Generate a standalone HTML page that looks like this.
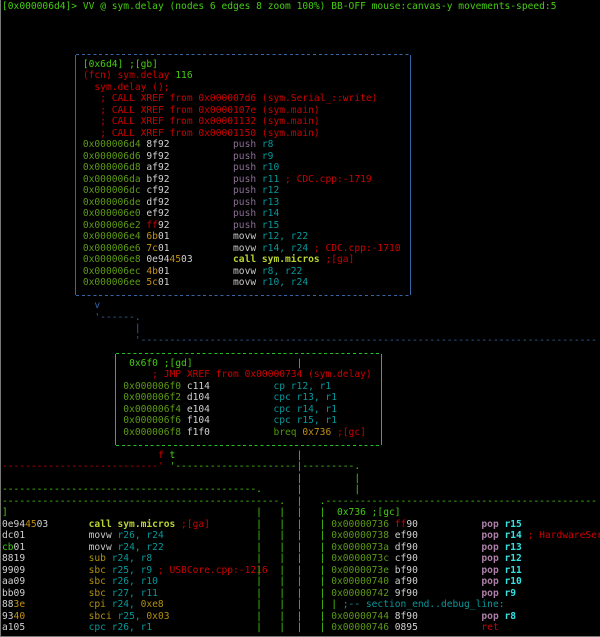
<!DOCTYPE html>
<html><head><meta charset="utf-8"><style>
html,body{margin:0;padding:0;background:#000;}
#s{position:relative;width:600px;height:637px;overflow:hidden;background:#000;font-family:"DejaVu Sans Mono","Liberation Mono",monospace;font-size:9.6px;border-left:1px solid #777;box-sizing:border-box;}
.r{position:absolute;left:1px;height:11.5px;line-height:11.5px;width:700px;}
.r span{position:absolute;white-space:pre;top:0;}
.g{color:#44cc11}.a{color:#5c9a14}.w{color:#d0d0d0}.R{color:#cc0000}.y{color:#c49010}
.p{color:#8a6e93}.c{color:#06989a}.C{color:#34e2e2;font-weight:bold}.m{color:#c8c8c8}
.k{color:#b8d430;font-weight:bold}.b{color:#3465a4}.o{color:#ad7fa8;font-weight:bold}.ol{color:#4e9a06}.s{color:#b09010}
.h{position:absolute;height:1px;}
.v{position:absolute;width:1px;}
.hb{background:repeating-linear-gradient(to right,#3465a4 0 3px,transparent 3px 5.78px)}
.hg{background:repeating-linear-gradient(to right,#22c022 0 3px,transparent 3px 5.78px)}
.vb{background:#3465a4}.vg{background:#22c022}
#bot{position:absolute;left:0;top:636px;width:600px;height:1px;background:#777}
</style></head><body><div id="s">
<div class="r" style="top:1px"><span class="g" style="left:0ch">[0x000006d4]&gt; VV @ sym.delay (nodes 6 edges 8 zoom 100%) BB-OFF mouse:canvas-y movements-speed:5</span></div>

<div class="h hb" style="left:75px;top:54px;width:335px"></div>
<div class="h hb" style="left:75px;top:295px;width:335px"></div>
<div class="v vb" style="left:74px;top:55px;height:240px"></div>
<div class="v vb" style="left:409px;top:55px;height:240px"></div>

<div class="r" style="top:58.5px"><span class="g" style="left:14ch">[0x6d4] ;[gb]</span></div>
<div class="r" style="top:70px"><span class="R" style="left:14ch">(fcn) sym.delay </span><span class="g" style="left:30ch">116</span></div>
<div class="r" style="top:81.5px"><span class="R" style="left:16ch">sym.delay ();</span></div>
<div class="r" style="top:93px"><span class="R" style="left:17ch">; CALL XREF from 0x000007d6 (sym.Serial_::write)</span></div>
<div class="r" style="top:104.5px"><span class="R" style="left:17ch">; CALL XREF from 0x0000107e (sym.main)</span></div>
<div class="r" style="top:116px"><span class="R" style="left:17ch">; CALL XREF from 0x00001132 (sym.main)</span></div>
<div class="r" style="top:127.5px"><span class="R" style="left:17ch">; CALL XREF from 0x00001150 (sym.main)</span></div>
<div class="r" style="top:139px"><span class="a" style="left:14ch">0x000006d4</span><span class="w" style="left:25ch">8f92</span><span class="p" style="left:40ch">push</span><span class="c" style="left:45ch">r8</span></div>
<div class="r" style="top:150.5px"><span class="a" style="left:14ch">0x000006d6</span><span class="w" style="left:25ch">9f92</span><span class="p" style="left:40ch">push</span><span class="c" style="left:45ch">r9</span></div>
<div class="r" style="top:162px"><span class="a" style="left:14ch">0x000006d8</span><span class="w" style="left:25ch">af92</span><span class="p" style="left:40ch">push</span><span class="c" style="left:45ch">r10</span></div>
<div class="r" style="top:173.5px"><span class="a" style="left:14ch">0x000006da</span><span class="w" style="left:25ch">bf92</span><span class="p" style="left:40ch">push</span><span class="c" style="left:45ch">r11</span><span class="R" style="left:49ch">; CDC.cpp:-1719</span></div>
<div class="r" style="top:185px"><span class="a" style="left:14ch">0x000006dc</span><span class="w" style="left:25ch">cf92</span><span class="p" style="left:40ch">push</span><span class="c" style="left:45ch">r12</span></div>
<div class="r" style="top:196.5px"><span class="a" style="left:14ch">0x000006de</span><span class="w" style="left:25ch">df92</span><span class="p" style="left:40ch">push</span><span class="c" style="left:45ch">r13</span></div>
<div class="r" style="top:208px"><span class="a" style="left:14ch">0x000006e0</span><span class="w" style="left:25ch">ef92</span><span class="p" style="left:40ch">push</span><span class="c" style="left:45ch">r14</span></div>
<div class="r" style="top:219.5px"><span class="a" style="left:14ch">0x000006e2</span><span class="R" style="left:25ch">ff</span><span class="w" style="left:27ch">92</span><span class="p" style="left:40ch">push</span><span class="c" style="left:45ch">r15</span></div>
<div class="r" style="top:231px"><span class="a" style="left:14ch">0x000006e4</span><span class="y" style="left:25ch">6b</span><span class="w" style="left:27ch">01</span><span class="m" style="left:40ch">movw</span><span class="c" style="left:45ch">r12, r22</span></div>
<div class="r" style="top:242.5px"><span class="a" style="left:14ch">0x000006e6</span><span class="y" style="left:25ch">7c</span><span class="w" style="left:27ch">01</span><span class="m" style="left:40ch">movw</span><span class="c" style="left:45ch">r14, r24</span><span class="R" style="left:54ch">; CDC.cpp:-1710</span></div>
<div class="r" style="top:254px"><span class="a" style="left:14ch">0x000006e8</span><span class="w" style="left:25ch">0e94</span><span class="y" style="left:29ch">45</span><span class="w" style="left:31ch">03</span><span class="k" style="left:40ch">call sym.micros</span><span class="R" style="left:56ch">;[ga]</span></div>
<div class="r" style="top:265.5px"><span class="a" style="left:14ch">0x000006ec</span><span class="y" style="left:25ch">4b</span><span class="w" style="left:27ch">01</span><span class="m" style="left:40ch">movw</span><span class="c" style="left:45ch">r8, r22</span></div>
<div class="r" style="top:277px"><span class="a" style="left:14ch">0x000006ee</span><span class="y" style="left:25ch">5c</span><span class="w" style="left:27ch">01</span><span class="m" style="left:40ch">movw</span><span class="c" style="left:45ch">r10, r24</span></div>

<div class="r" style="top:300px"><span class="b" style="left:16ch">v</span></div>
<div class="r" style="top:311.5px"><span class="b" style="left:16ch">'------.</span></div>
<div class="r" style="top:323px"><span class="b" style="left:23ch">|</span></div>
<div class="r" style="top:334.5px"><span class="b" style="left:23ch">'-------------------------------------------------------------------------------</span></div>

<div class="h hg" style="left:115px;top:353px;width:266px"></div>
<div class="h hg" style="left:115px;top:445px;width:266px"></div>
<div class="v vg" style="left:114px;top:354px;height:91px"></div>
<div class="v vg" style="left:380px;top:354px;height:91px"></div>
<div class="r" style="top:357.5px"><span class="g" style="left:22ch">0x6f0 ;[gd]</span><span class="g" style="left:51ch">|</span></div>
<div class="r" style="top:369px"><span class="R" style="left:26ch">; JMP XREF from 0x00000734 (sym.delay)</span></div>
<div class="r" style="top:380.5px"><span class="a" style="left:21ch">0x000006f0</span><span class="w" style="left:32ch">c114</span><span class="c" style="left:47ch">cp r12, r1</span></div>
<div class="r" style="top:392px"><span class="a" style="left:21ch">0x000006f2</span><span class="w" style="left:32ch">d104</span><span class="c" style="left:47ch">cpc r13, r1</span></div>
<div class="r" style="top:403.5px"><span class="a" style="left:21ch">0x000006f4</span><span class="w" style="left:32ch">e104</span><span class="c" style="left:47ch">cpc r14, r1</span></div>
<div class="r" style="top:415px"><span class="a" style="left:21ch">0x000006f6</span><span class="w" style="left:32ch">f104</span><span class="c" style="left:47ch">cpc r15, r1</span></div>
<div class="r" style="top:426.5px"><span class="a" style="left:21ch">0x000006f8</span><span class="w" style="left:32ch">f1f0</span><span class="ol" style="left:47ch">breq</span><span class="y" style="left:52ch">0x736</span><span class="R" style="left:58ch">;[gc]</span></div>

<div class="r" style="top:449.5px"><span class="R" style="left:27ch">f</span><span class="g" style="left:29ch">t</span><span class="g" style="left:51ch">|</span></div>
<div class="r" style="top:461px"><span class="R" style="left:0ch">---------------------------'</span><span class="g" style="left:29ch">'---------------------|---------.</span></div>
<div class="r" style="top:472.5px"><span class="g" style="left:51ch">|</span><span class="g" style="left:61ch">|</span></div>
<div class="r" style="top:484px"><span class="g" style="left:0ch">--------------------------------------------.</span><span class="g" style="left:51ch">|</span><span class="g" style="left:61ch">|</span></div>
<div class="r" style="top:495.5px"><span class="g" style="left:0ch">------------------------------------------------.</span><span class="g" style="left:51ch">|</span><span class="g" style="left:55ch">.-----------------------------------------------</span></div>
<div class="r" style="top:507px"><span class="g" style="left:0ch">]</span><span class="g" style="left:44ch">|</span><span class="g" style="left:48ch">|</span><span class="g" style="left:51ch">|</span><span class="g" style="left:55ch">|</span><span class="g" style="left:58ch">0x736 ;[gc]</span></div>

<div class="r" style="top:518.5px"><span class="w" style="left:0ch">0e94</span><span class="y" style="left:4ch">45</span><span class="w" style="left:6ch">03</span><span class="k" style="left:15ch">call sym.micros</span><span class="R" style="left:31ch">;[ga]</span><span class="g" style="left:44ch">|</span><span class="g" style="left:48ch">|</span><span class="g" style="left:51ch">|</span><span class="g" style="left:55ch">|</span><span class="a" style="left:57ch">0x00000736</span><span class="R" style="left:68ch">ff</span><span class="w" style="left:70ch">90</span><span class="o" style="left:83ch">pop</span><span class="C" style="left:87ch">r15</span></div>
<div class="r" style="top:530px"><span class="w" style="left:0ch">dc01</span><span class="m" style="left:15ch">movw</span><span class="c" style="left:20ch">r26, r24</span><span class="g" style="left:44ch">|</span><span class="g" style="left:48ch">|</span><span class="g" style="left:51ch">|</span><span class="g" style="left:55ch">|</span><span class="a" style="left:57ch">0x00000738</span><span class="w" style="left:68ch">ef90</span><span class="o" style="left:83ch">pop</span><span class="C" style="left:87ch">r14</span><span class="R" style="left:91ch">; HardwareSer</span></div>
<div class="r" style="top:541.5px"><span class="g" style="left:0ch">cb</span><span class="w" style="left:2ch">01</span><span class="m" style="left:15ch">movw</span><span class="c" style="left:20ch">r24, r22</span><span class="g" style="left:44ch">|</span><span class="g" style="left:48ch">|</span><span class="g" style="left:51ch">|</span><span class="g" style="left:55ch">|</span><span class="a" style="left:57ch">0x0000073a</span><span class="w" style="left:68ch">df90</span><span class="o" style="left:83ch">pop</span><span class="C" style="left:87ch">r13</span></div>
<div class="r" style="top:553px"><span class="w" style="left:0ch">8819</span><span class="s" style="left:15ch">sub</span><span class="c" style="left:19ch">r24, r8</span><span class="g" style="left:44ch">|</span><span class="g" style="left:48ch">|</span><span class="g" style="left:51ch">|</span><span class="g" style="left:55ch">|</span><span class="a" style="left:57ch">0x0000073c</span><span class="w" style="left:68ch">cf90</span><span class="o" style="left:83ch">pop</span><span class="C" style="left:87ch">r12</span></div>
<div class="r" style="top:564.5px"><span class="w" style="left:0ch">9909</span><span class="s" style="left:15ch">sbc</span><span class="c" style="left:19ch">r25, r9</span><span class="R" style="left:27ch">; USBCore.cpp:-1216</span><span class="g" style="left:44ch">|</span><span class="g" style="left:48ch">|</span><span class="g" style="left:51ch">|</span><span class="g" style="left:55ch">|</span><span class="a" style="left:57ch">0x0000073e</span><span class="w" style="left:68ch">bf90</span><span class="o" style="left:83ch">pop</span><span class="C" style="left:87ch">r11</span></div>
<div class="r" style="top:576px"><span class="w" style="left:0ch">aa09</span><span class="s" style="left:15ch">sbc</span><span class="c" style="left:19ch">r26, r10</span><span class="g" style="left:44ch">|</span><span class="g" style="left:48ch">|</span><span class="g" style="left:51ch">|</span><span class="g" style="left:55ch">|</span><span class="a" style="left:57ch">0x00000740</span><span class="w" style="left:68ch">af90</span><span class="o" style="left:83ch">pop</span><span class="C" style="left:87ch">r10</span></div>
<div class="r" style="top:587.5px"><span class="w" style="left:0ch">bb09</span><span class="s" style="left:15ch">sbc</span><span class="c" style="left:19ch">r27, r11</span><span class="g" style="left:44ch">|</span><span class="g" style="left:48ch">|</span><span class="g" style="left:51ch">|</span><span class="g" style="left:55ch">|</span><span class="a" style="left:57ch">0x00000742</span><span class="w" style="left:68ch">9f90</span><span class="o" style="left:83ch">pop</span><span class="C" style="left:87ch">r9</span></div>
<div class="r" style="top:599px"><span class="w" style="left:0ch">88</span><span class="y" style="left:2ch">3e</span><span class="s" style="left:15ch">cpi</span><span class="c" style="left:19ch">r24,</span><span class="s" style="left:24ch">0xe8</span><span class="g" style="left:44ch">|</span><span class="g" style="left:48ch">|</span><span class="g" style="left:51ch">|</span><span class="g" style="left:55ch">|</span><span class="g" style="left:57ch">|</span><span class="c" style="left:59ch">;-- section_end..debug_line:</span></div>
<div class="r" style="top:610.5px"><span class="w" style="left:0ch">93</span><span class="y" style="left:2ch">40</span><span class="s" style="left:15ch">sbci</span><span class="c" style="left:20ch">r25,</span><span class="s" style="left:25ch">0x03</span><span class="g" style="left:44ch">|</span><span class="g" style="left:48ch">|</span><span class="g" style="left:51ch">|</span><span class="g" style="left:55ch">|</span><span class="a" style="left:57ch">0x00000744</span><span class="w" style="left:68ch">8f90</span><span class="o" style="left:83ch">pop</span><span class="C" style="left:87ch">r8</span></div>
<div class="r" style="top:622px"><span class="w" style="left:0ch">a105</span><span class="c" style="left:15ch">cpc r26, r1</span><span class="g" style="left:44ch">|</span><span class="g" style="left:48ch">|</span><span class="g" style="left:51ch">|</span><span class="g" style="left:55ch">|</span><span class="a" style="left:57ch">0x00000746</span><span class="w" style="left:68ch">0895</span><span class="R" style="left:83ch">ret</span></div>
<div id="bot"></div>
</div></body></html>
